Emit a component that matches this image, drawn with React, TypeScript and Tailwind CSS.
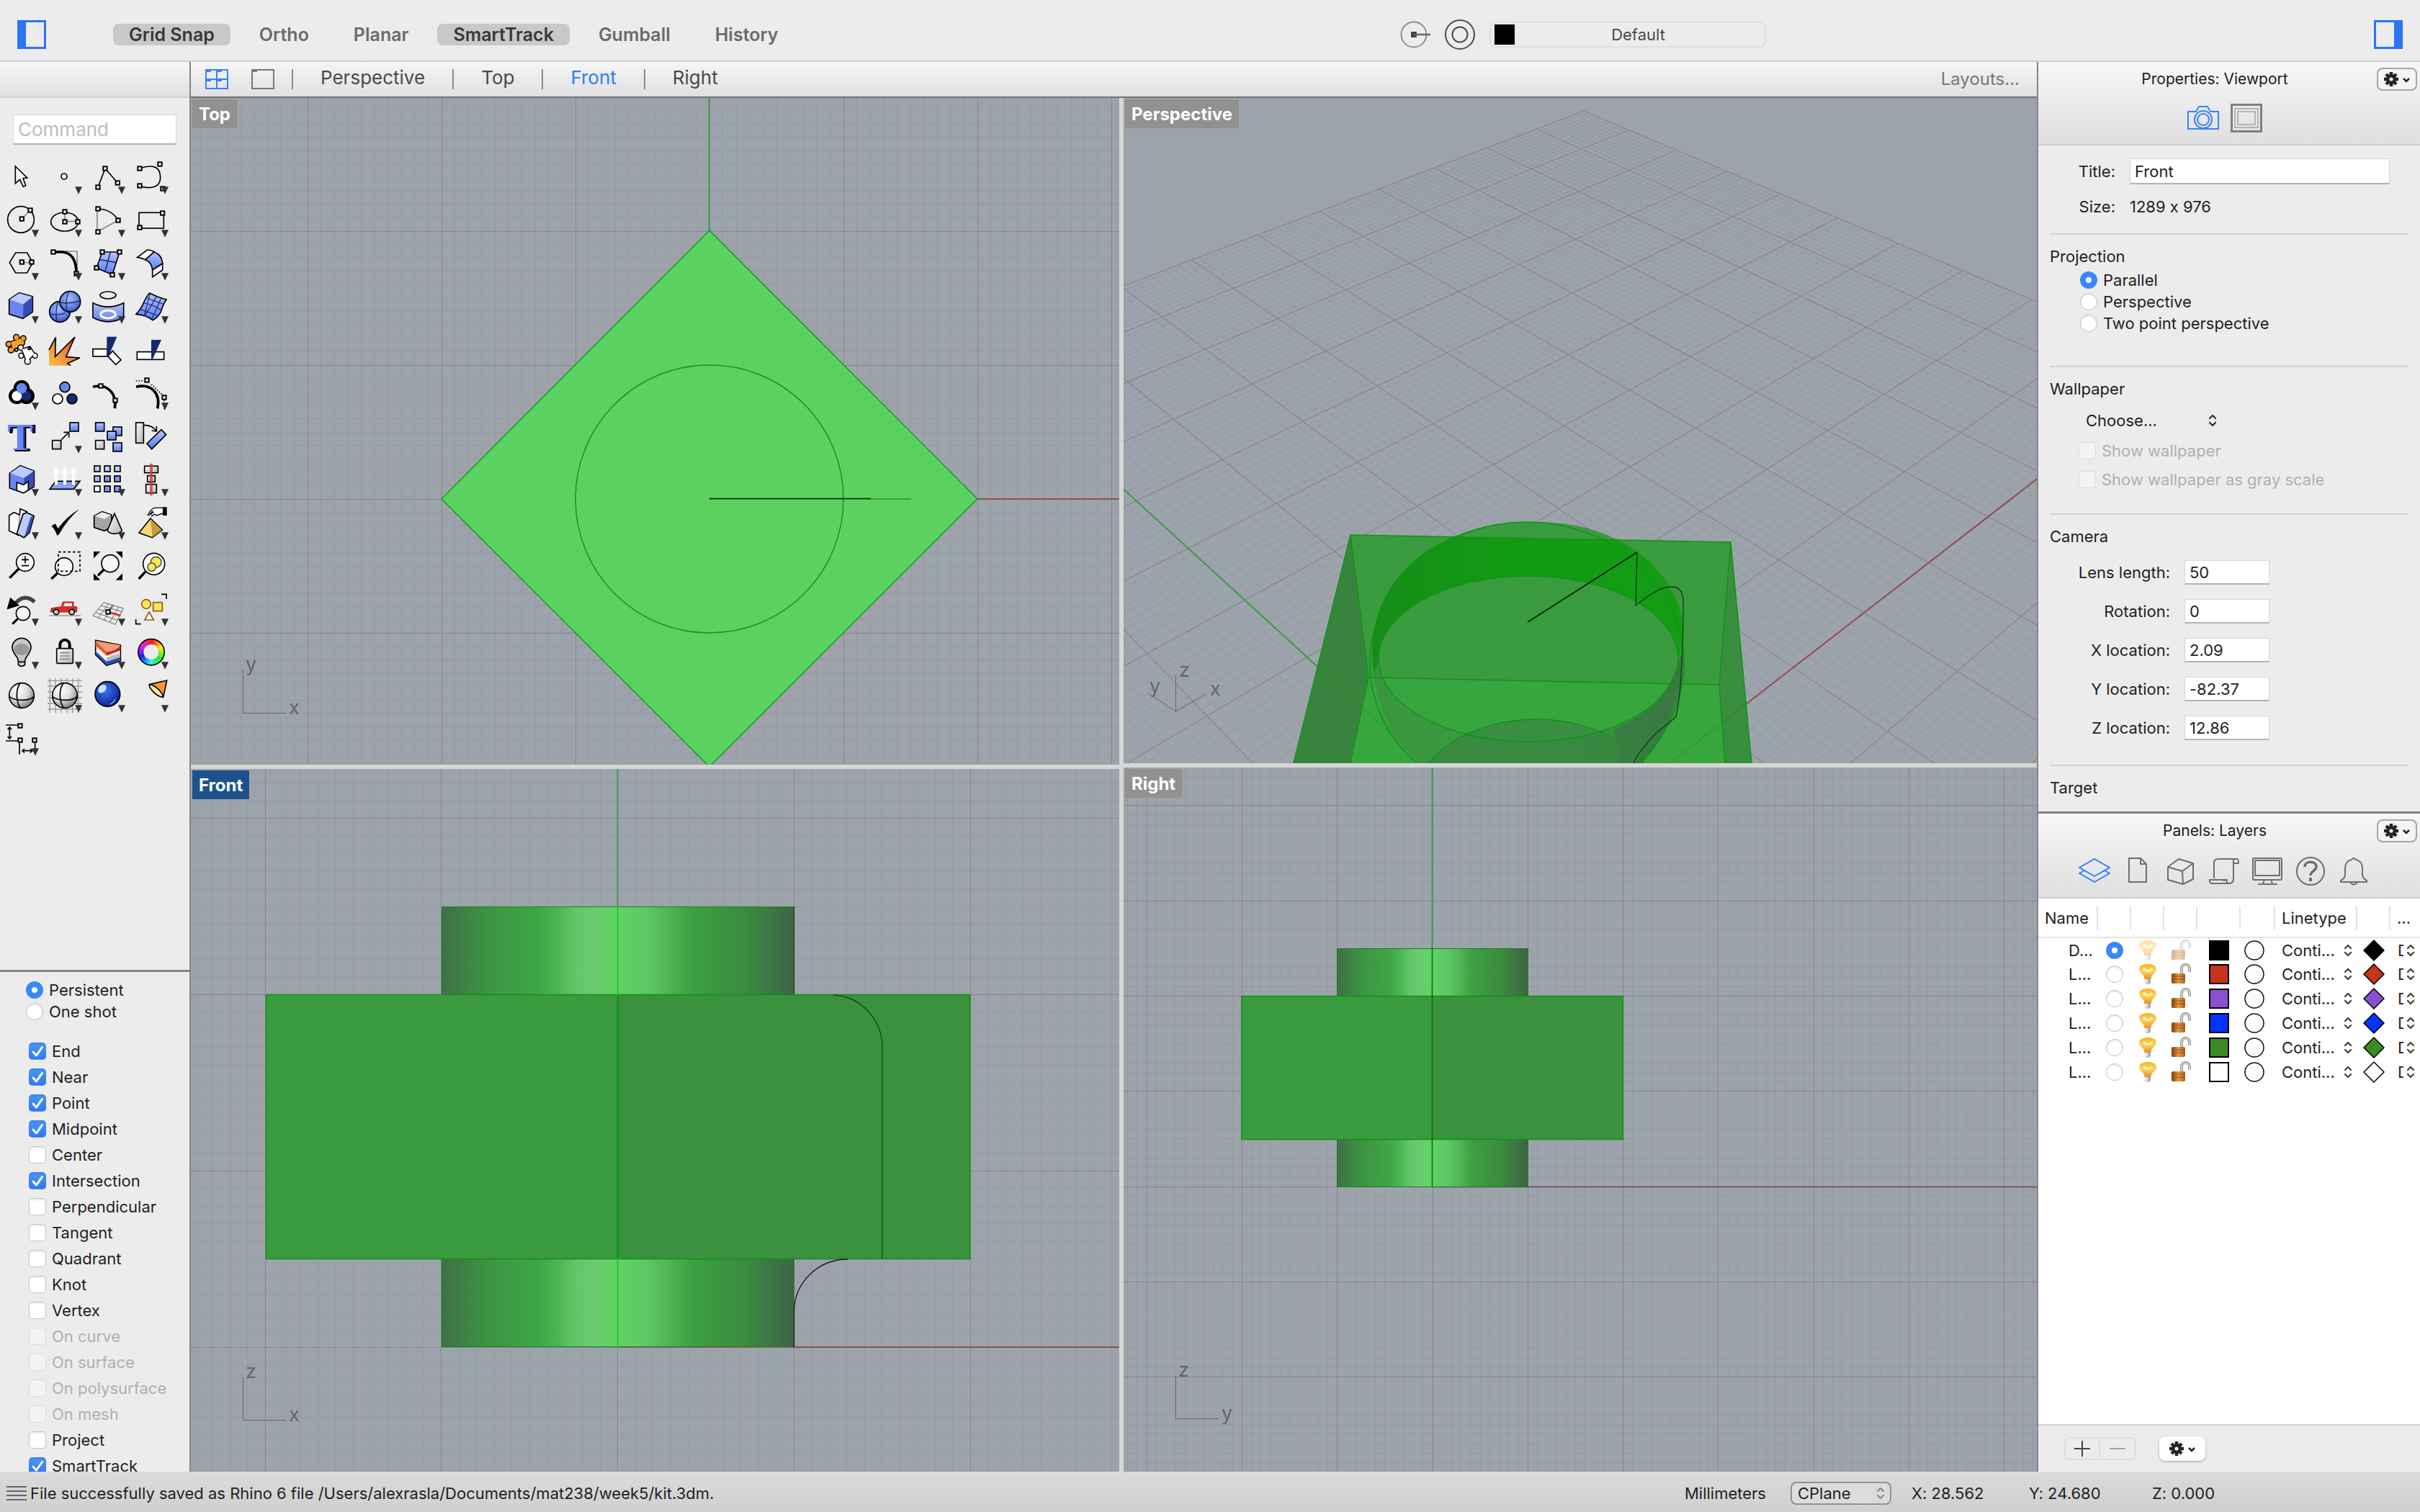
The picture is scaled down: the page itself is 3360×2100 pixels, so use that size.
import { useState } from 'react';
import type { ReactNode } from 'react';
import { clsx } from 'clsx';

/* ---------- small controls ---------- */

function UpDown({ className }: { className?: string }) {
  return (
    <svg viewBox="0 0 12 18" className={clsx('pointer-events-none w-3 h-[18px]', className)} fill="none" stroke="currentColor" strokeWidth="2.4" strokeLinecap="round" strokeLinejoin="round" aria-hidden>
      <path d="M2 6 6 2 10 6M2 12 6 16 10 12" />
    </svg>
  );
}

function Check({ label, on, disabled, className }: { label: string; on?: boolean; disabled?: boolean; className?: string }) {
  return (
    <label className={clsx('flex items-center gap-2 whitespace-nowrap', disabled && 'text-[#b0b0b0]', className)}>
      <span className="grid shrink-0">
        <input type="checkbox" defaultChecked={on} disabled={disabled}
          className="peer col-start-1 row-start-1 appearance-none w-6 h-6 rounded-[5px] bg-white border border-[#c6c6c6] shadow-[inset_0_2px_2px_rgba(0,0,0,0.08)] checked:border-transparent checked:bg-linear-to-b checked:from-[#4a97f8] checked:to-[#2f78f6] disabled:bg-[#f3f3f3] disabled:border-[#dcdcdc] disabled:shadow-none" />
        <svg viewBox="0 0 24 24" className="col-start-1 row-start-1 w-6 h-6 hidden peer-checked:block pointer-events-none" fill="none" stroke="#fff" strokeWidth="3" strokeLinecap="round" strokeLinejoin="round" aria-hidden>
          <path d="M6 13 10.5 18 18.5 6.5" />
        </svg>
      </span>
      {label}
    </label>
  );
}

const radioCls = 'shrink-0 appearance-none w-6 h-6 rounded-full bg-white border border-[#c0c0c0] shadow-[inset_0_2px_2px_rgba(0,0,0,0.08)] checked:border-[8px] checked:border-[#3b87f7] checked:shadow-none';

function Radio({ label, name, on }: { label: string; name: string; on?: boolean }) {
  return (
    <label className="flex items-center gap-2 h-[30px] whitespace-nowrap">
      <input type="radio" name={name} defaultChecked={on} className={radioCls} />
      {label}
    </label>
  );
}

const fieldCls = 'bg-white border border-[#d6d6d6] border-b-2 border-b-[#b4b4b4] px-[6px] outline-none';

function Gear() {
  return (
    <svg viewBox="0 0 40 24" className="w-10 h-6" aria-hidden>
      <g stroke="#222" strokeWidth="4.5">
        <path d="M12 2V22M2 12H22M5 5 19 19M19 5 5 19" />
      </g>
      <circle cx="12" cy="12" r="7" fill="#222" />
      <circle cx="12" cy="12" r="2.6" fill="#eee" />
      <path d="M29 11 33 15 37 11" fill="none" stroke="#222" strokeWidth="2.6" />
    </svg>
  );
}

/* ---------- tool palette ---------- */

const N = ({ x, y }: { x: number; y: number }) => <rect x={x - 8} y={y - 8} width="16" height="16" fill="#fff" strokeWidth="6" />;
const Sq = ({ x, y, s = 36, f = 'url(#blueG)' }: { x: number; y: number; s?: number; f?: string }) => (
  <rect x={x} y={y} width={s} height={s} fill={f} />
);

function ColorWheel() {
  return (
    <>
      <circle cx="90" cy="107" r="57" fill="#000" stroke="none" />
      {Array.from({ length: 36 }, (_, i) => {
        const a = ((i * 10 - 90) * Math.PI) / 180;
        const b = ((i * 10 - 79) * Math.PI) / 180;
        return (
          <path key={i} stroke={`hsl(${i * 10} 95% 55%)`} strokeWidth="20"
            d={`M${90 + 42 * Math.cos(a)} ${107 + 42 * Math.sin(a)}A42 42 0 0 1 ${90 + 42 * Math.cos(b)} ${107 + 42 * Math.sin(b)}`} />
        );
      })}
      <circle cx="90" cy="107" r="32" fill="#ececec" stroke="none" />
    </>
  );
}

// each piece is drawn twice, a black outline first and then the fill over it
const whitePiece = (
  <>
    <path d="M92 106 124 96 142 124 112 156Z" />
    <circle cx="86" cy="98" r="9" />
    <circle cx="146" cy="132" r="8" />
    <circle cx="115" cy="156" r="10" />
    <circle cx="88" cy="132" r="8" />
  </>
);
const orangePiece = (
  <>
    <path d="M44 76 88 60 96 86 54 106Z" />
    <circle cx="68" cy="56" r="10" />
    <circle cx="97" cy="60" r="9" />
    <circle cx="36" cy="84" r="9" />
    <circle cx="46" cy="108" r="10" />
    <circle cx="92" cy="78" r="9" />
  </>
);

function Puzzle() {
  return (
    <>
      <g stroke="#000" strokeWidth="9" fill="#000">{orangePiece}</g>
      <g stroke="none" fill="#f39f27">{orangePiece}</g>
      <g stroke="#000" strokeWidth="9" fill="#000">{whitePiece}</g>
      <g stroke="none" fill="#fff">{whitePiece}</g>
      <g stroke="#000" fill="#ececec"><circle cx="68" cy="108" r="6" /><circle cx="122" cy="102" r="5" /></g>
    </>
  );
}

const wireSphere = (
  <>
    <circle cx="90" cy="108" r="52" fill="url(#greyBall)" />
    <path d="M85 56C65 80 65 130 85 160M38 112C60 130 120 134 142 112" />
  </>
);

type Tool = { name: string; more?: boolean; art: ReactNode };

const tools: Tool[] = [
  { name: 'Select', art: <path d="M64 63 113 111 96 113 107 143 97 148 83 118 64 134Z" fill="#fff" /> },
  { name: 'Point', more: true, art: <circle cx="87" cy="105" r="12" fill="#fff" /> },
  { name: 'Polyline', more: true, art: <><path d="M48 150 78 72 130 132" /><N x={48} y={150} /><N x={78} y={72} /><N x={130} y={132} /></> },
  { name: 'Curve', more: true, art: <><path d="M42 72C90 55 128 60 128 108 128 150 92 160 42 146" /><N x={42} y={72} /><N x={126} y={54} /><N x={42} y={144} /><N x={138} y={156} /></> },

  { name: 'Circle', more: true, art: <><circle cx="87" cy="105" r="55" /><path d="M91 102 126 66" stroke="#888" /><N x={91} y={102} /><N x={126} y={66} /></> },
  { name: 'Ellipse', more: true, art: <><ellipse cx="89" cy="114" rx="57" ry="39" /><path d="M90 72V112H144" stroke="#888" /><N x={90} y={72} /><N x={90} y={114} /><N x={144} y={114} /></> },
  { name: 'Arc', more: true, art: <><path d="M132 108 45 156V60" stroke="#888" /><path d="M48 60Q105 62 132 108" /><N x={48} y={60} /><N x={132} y={108} /><N x={48} y={156} /></> },
  { name: 'Rectangle', more: true, art: <><rect x="39" y="76" width="103" height="65" /><N x={137} y={78} /><N x={42} y={138} /></> },

  { name: 'Polygon', more: true, art: <><path d="M40 104 65 63H113L136 104 113 147H65Z" /><path d="M91 104H132" stroke="#888" /><N x={91} y={102} /><N x={132} y={102} /></> },
  { name: 'Fillet', more: true, art: <><path d="M42 57H141V150" stroke="#888" /><path d="M42 60H78C118 62 138 92 138 150" strokeWidth="11" /><N x={42} y={60} /><N x={138} y={150} /></> },
  { name: 'Surface', more: true, art: <><path d="M66 60H138L108 155 42 126Z" fill="url(#blueG)" /><path d="M100 60 78 140M56 92 124 104" stroke="#1f3375" /><N x={66} y={60} /><N x={138} y={60} /><N x={108} y={155} /><N x={42} y={126} /></> },
  { name: 'Sweep', more: true, art: <><path d="M32 82 74 51Q92 52 102 60L66 92Q50 84 32 82Z" fill="#fff" /><path d="M102 60Q135 72 137 108L95 135Q92 104 66 92Z" fill="url(#blueG)" /><path d="M137 108V135L95 164V135Z" fill="#fff" /></> },

  { name: 'Box', more: true, art: <><path d="M38 78 80 50 136 66V130L95 157 38 139Z" fill="#6885f5" /><path d="M40 78 80 52 134 67 97 98Z" fill="#bccbfb" stroke="none" /><path d="M97 98 134 68V129L96 154Z" fill="#344db5" stroke="none" /></> },
  { name: 'Sphere', more: true, art: <><circle cx="69" cy="129" r="43" fill="url(#blueBall)" /><circle cx="112" cy="87" r="43" fill="url(#blueBall)" /><path d="M28 138Q60 145 92 135M62 88Q48 130 58 168M71 90Q110 98 153 84M106 46Q90 80 100 128" stroke="#1f3375" strokeWidth="4" /></> },
  { name: 'Project', more: true, art: <><ellipse cx="90" cy="60" rx="33" ry="15" /><path d="M27 92Q90 125 155 92V153Q90 188 27 153Z" fill="url(#blueG)" /><ellipse cx="90" cy="140" rx="31" ry="16" stroke="#fff" strokeWidth="9" /></> },
  { name: 'Surface edit', more: true, art: <><path d="M83 51Q120 70 153 78 138 100 130 130 115 155 96 164 70 142 27 139 48 118 58 92 70 65 83 51Z" fill="url(#blueG)" /><path d="M58 92Q100 100 130 122M112 65Q88 110 60 148M42 118 120 145M72 72 142 98M85 53 62 142M130 75 92 160" stroke="#1f3375" strokeWidth="4" /></> },

  { name: 'Join', art: <Puzzle /> },
  { name: 'Explode', art: <><path d="M24 108 52 56 50 136 132 54 95 137 153 141 101 164 115 173H24Z" fill="url(#fire)" stroke="none" /><path d="M24 108 52 56 50 136 132 54 95 137 153 141 101 164 115 173" /></> },
  { name: 'Trim', art: <><rect x="27" y="104" width="60" height="31" fill="#fff" /><path d="M109 112 144 150 122 169 89 134Z" fill="#fff" /><path d="M85 53H127L96 125 85 138Z" fill="#172a70" stroke="none" /></> },
  { name: 'Split', art: <><rect x="31" y="116" width="112" height="32" fill="#fff" /><path d="M90 66H132L98 142 90 150Z" fill="#172a70" stroke="none" /></> },

  { name: 'Group', more: true, art: <><g strokeWidth="20"><circle cx="90" cy="88" r="24" /><circle cx="70" cy="120" r="24" /><circle cx="110" cy="120" r="24" /></g><g stroke="none"><circle cx="110" cy="120" r="21" fill="#172a70" /><circle cx="70" cy="120" r="21" fill="#fff" /><circle cx="90" cy="88" r="22" fill="#6885f5" /></g></> },
  { name: 'Ungroup', art: <><circle cx="90" cy="83" r="21" fill="#6885f5" /><circle cx="60" cy="132" r="21" fill="#fff" /><circle cx="120" cy="132" r="21" fill="#172a70" /></> },
  { name: 'Edit points', art: <><path d="M27 82C85 68 128 105 118 172" strokeWidth="11" /><N x={60} y={78} /><N x={120} y={138} /></> },
  { name: 'Control points', more: true, art: <><path d="M27 82C90 66 130 110 116 172" strokeWidth="11" /><path d="M26 57H60M90 72 144 122V176" strokeDasharray="5 6" /><N x={72} y={54} /><N x={144} y={126} /></> },

  { name: 'Text', art: <><text x="94" y="168" textAnchor="middle" fontFamily="Liberation Serif, serif" fontWeight="700" fontSize="160" fill="#2c44a4" strokeWidth="6">T</text><text x="84" y="164" textAnchor="middle" fontFamily="Liberation Serif, serif" fontWeight="700" fontSize="160" fill="#6885f5" stroke="none" aria-hidden>T</text></> },
  { name: 'Move', more: true, art: <><Sq x={38} y={125} f="url(#greyG)" /><Sq x={111} y={51} /><path d="M76 122 105 93M85 91H107V113" /></> },
  { name: 'Copy', art: <><Sq x={38} y={51} /><Sq x={111} y={69} /><Sq x={87} y={87} /><Sq x={38} y={125} f="url(#greyG)" /><Sq x={111} y={135} /></> },
  { name: 'Rotate', art: <><rect x="26" y="51" width="32" height="85" fill="url(#greyG)" /><path d="M60 62Q92 60 112 86M92 84 112 87V66" /><path d="M72 138 132 80 152 101 92 161Z" fill="url(#blueG)" /></> },

  { name: 'Boolean', more: true, art: <><path d="M40 82 84 50 142 72V138L98 164 40 144Z" fill="#6885f5" /><path d="M42 82 84 52 140 73 100 102Z" fill="#bccbfb" stroke="none" /><path d="M100 102 140 74V137L100 160Z" fill="#344db5" stroke="none" /><path d="M70 120 98 130 118 116V152L98 164 70 154Z" fill="#fff" /></> },
  { name: 'Extrude', more: true, art: <><path d="M52 115H153L127 148H27Z" fill="#87a0f8" /><path d="M54 130V80M90 130V80M126 130V80" stroke="#fff" strokeWidth="12" /><path d="M38 82 54 55 70 82ZM74 82 90 55 106 82ZM110 82 126 55 142 82Z" fill="#fff" stroke="none" /></> },
  { name: 'Array', more: true, art: <>{[33, 75, 117].map((y, r) => [33, 75, 117].map((x, c) => <Sq key={`${x}-${y}`} x={x} y={y + 18} s={24} f={r === 2 && c === 0 ? '#fff' : r === 0 ? '#bccbfb' : c === 0 ? '#a9bbfa' : '#7e98f8'} />))}</> },
  { name: 'Align', more: true, art: <><rect x="62" y="52" width="56" height="28" fill="url(#greyG)" /><rect x="74" y="92" width="32" height="26" fill="url(#greyG)" /><rect x="68" y="128" width="44" height="36" fill="url(#greyG)" /><path d="M90 42V174" stroke="#c9372c" strokeWidth="11" opacity=".8" /></> },

  { name: 'Bend', more: true, art: <><path d="M38 78 58 65 82 76 84 50 112 62 90 100 76 160 38 142Z" fill="#fafafa" /><path d="M82 76 76 150" stroke="#999" /><path d="M70 154 96 72 112 66 142 80 122 150 100 170Z" fill="#bccbfb" /><path d="M140 80 120 150 102 166 128 84Z" fill="#344db5" stroke="none" /></> },
  { name: 'Check', more: true, art: <path d="M34 122 50 112 62 132Q100 80 150 52 100 95 66 156L58 162Q48 132 34 122Z" fill="#000" stroke="none" /> },
  { name: 'Mesh', more: true, art: <><path d="M32 80 65 62 105 75V125L75 142 32 128Z" fill="#a5a5a5" /><path d="M34 80 65 64 103 76 75 92Z" fill="#eee" stroke="none" /><path d="M117 70 148 140Q140 154 117 154 94 154 87 140Z" fill="url(#greyG)" /></> },
  { name: 'Drag', more: true, art: <><path d="M87 90 136 138 94 170 39 150Z" fill="#f6d77c" /><path d="M87 92 134 138 95 168Z" fill="#c79a3f" stroke="none" /><path d="M75 78Q88 50 104 46H140V68L112 78 104 72 90 82M88 74 100 62M80 78 96 58" fill="#fff" strokeWidth="4" /><rect x="138" y="43" width="17" height="35" fill="#000" stroke="none" /></> },

  { name: 'Zoom', art: <><path d="M78 120 40 158" strokeWidth="10" /><circle cx="105" cy="93" r="37" fill="#f6f6f6" /><path d="M90 82H120M105 67V97M90 107H120" /></> },
  { name: 'Zoom window', art: <><path d="M62 136 34 162" strokeWidth="10" /><circle cx="87" cy="111" r="37" fill="#f6f6f6" /><rect x="63" y="50" width="90" height="80" strokeDasharray="11 9" /></> },
  { name: 'Zoom extents', art: <><path d="M74 122 48 148" strokeWidth="10" /><circle cx="99" cy="98" r="36" fill="#f6f6f6" /><path d="M30 48H58L30 76ZM150 48V76L122 48ZM30 167V139L58 167ZM150 167H122L150 139Z" fill="#000" stroke="none" /></> },
  { name: 'Zoom selected', art: <><path d="M66 132 38 162" strokeWidth="10" /><circle cx="101" cy="100" r="45" fill="#fff" /><g fill="#fbe84f" stroke="#555"><circle cx="110" cy="92" r="22" /><circle cx="92" cy="113" r="17" /></g></> },

  { name: 'Undo view', more: true, art: <><path d="M62 86Q100 40 144 78" stroke="#444" strokeWidth="16" /><path d="M32 106 44 64 76 92Z" fill="#000" /><path d="M74 148 52 170" strokeWidth="9" /><circle cx="96" cy="126" r="29" fill="#f6f6f6" /></> },
  { name: 'Named views', more: true, art: <><path d="M24 135H156" stroke="#999" /><path d="M31 118 34 104 76 98 82 78H126V98H140V120H31Z" fill="#d92f2a" stroke="#b01f1c" strokeWidth="3" /><path d="M84 96 90 83H120V96Z" fill="#fff" stroke="none" /><circle cx="54" cy="120" r="11" fill="#ccc" /><circle cx="119" cy="120" r="11" fill="#ccc" /></> },
  { name: 'CPlane', more: true, art: <><path d="M72 80 154 105 120 172 27 135ZM61 94 147 118M49 108 139 136M38 122 129 154M92 86 50 144M113 92 74 154M134 99 97 163" stroke="#666" strokeWidth="3" /><path d="M92 116 112 90" stroke="#3fa535" strokeWidth="8" /><path d="M98 122 142 135" stroke="#cf2a27" strokeWidth="8" /><N x={90} y={120} /></> },
  { name: 'Layouts', more: true, art: <><g stroke="#96561d" fill="#fbe84f"><circle cx="69" cy="87" r="19" /><rect x="98" y="80" width="38" height="36" /><path d="M81 120 100 153H63Z" fill="#fff" /></g><path d="M132 46H153V66M26 150V170H47" /></> },

  { name: 'Hide', more: true, art: <><path d="M76 160V142C74 124 51 112 51 88A39 39 0 0 1 129 88C129 112 106 124 104 142V160Q90 172 76 160Z" fill="#c9c9c9" /><ellipse cx="90" cy="96" rx="32" ry="24" fill="#999" stroke="none" /><path d="M76 148H104" /></> },
  { name: 'Lock', more: true, art: <><path d="M70 92V76A20 20 0 0 1 110 76V92" strokeWidth="12" /><rect x="56" y="92" width="68" height="62" rx="4" fill="url(#greyG)" /><path d="M70 110H110M70 123H110M70 136H110" stroke="#888" /></> },
  { name: 'Layers', more: true, art: <><path d="M38 58 142 78V144L84 163 38 118Z" fill="#f5f5f5" /><path d="M40 104 84 146 140 128V142L84 161 40 118Z" fill="#274cb5" stroke="none" /><path d="M84 130 140 112V128L84 146Z" fill="#bbb" stroke="none" /><path d="M38 60 84 106V122L38 80Z" fill="#ee5a24" stroke="none" /><path d="M38 60 142 78Q118 104 84 106Z" fill="#f39a77" stroke="none" /><path d="M84 106Q118 104 142 80V100L84 122Z" fill="#c32a1c" stroke="none" /></> },
  { name: 'Color', more: true, art: <ColorWheel /> },

  { name: 'Shade', art: wireSphere },
  { name: 'Shade grid', more: true, art: <><path d="M28 36V180M51 36V180M75 36V180M99 36V180M122 36V180M146 36V180M18 46H162M18 69H162M18 93H162M18 117H162M18 141H162M18 165H162" stroke="#999" strokeWidth="4" />{wireSphere}</> },
  { name: 'Render', more: true, art: <><circle cx="88" cy="102" r="52" fill="url(#deepBall)" /><ellipse cx="66" cy="80" rx="20" ry="14" transform="rotate(-45 66 80)" fill="#cfe0ff" stroke="none" /><path d="M92 146Q112 138 124 116 118 142 92 146Z" fill="#9fe0ff" stroke="none" /></> },
  { name: 'Spotlight', more: true, art: <><path d="M82 62 155 45 140 115Q96 104 82 62Z" fill="#f49a33" /><ellipse cx="110" cy="88" rx="36" ry="11" transform="rotate(42 110 88)" fill="#fde9b8" /></> },

  { name: 'Dimension', more: true, art: <><path d="M24 51H84M24 117H84M81 125V173M146 125V150M40 64V104M94 158H134" /><path d="M32 70 40 60 48 70M32 98 40 108 48 98M102 150 93 158 102 166M126 150 135 158 126 166" /><N x={84} y={54} /><N x={84} y={114} /><N x={144} y={114} /></> },
];

function Defs() {
  return (
    <svg className="absolute w-0 h-0" aria-hidden>
      <defs>
        <linearGradient id="blueG" x1="0" y1="0" x2="0" y2="1"><stop offset="0" stopColor="#b4c4fb" /><stop offset="1" stopColor="#5b7cf3" /></linearGradient>
        <linearGradient id="greyG" x1="0" y1="0" x2="1" y2="1"><stop offset="0" stopColor="#fdfdfd" /><stop offset="1" stopColor="#b4b4b4" /></linearGradient>
        <linearGradient id="fire" x1="0" y1="1" x2="1" y2="0"><stop offset="0" stopColor="#f9c142" /><stop offset=".5" stopColor="#f0863a" /><stop offset="1" stopColor="#e2341f" /></linearGradient>
        <radialGradient id="blueBall" cx=".45" cy=".35" r=".7"><stop offset="0" stopColor="#a9bcfa" /><stop offset=".6" stopColor="#6684e8" /><stop offset="1" stopColor="#2c44a4" /></radialGradient>
        <radialGradient id="greyBall" cx=".35" cy=".3" r=".8"><stop offset="0" stopColor="#fff" /><stop offset=".5" stopColor="#dcdcdc" /><stop offset="1" stopColor="#6a6a6a" /></radialGradient>
        <radialGradient id="deepBall" cx=".4" cy=".35" r=".7"><stop offset="0" stopColor="#3c78f0" /><stop offset="1" stopColor="#0b1a8c" /></radialGradient>
        <linearGradient id="bulb" x1="0" y1="0" x2="0" y2="1"><stop offset="0" stopColor="#f8b020" /><stop offset=".45" stopColor="#fbd560" /><stop offset="1" stopColor="#e88a1c" /></linearGradient>
        <linearGradient id="brass" x1="0" y1="0" x2="1" y2="0"><stop offset="0" stopColor="#7a3f10" /><stop offset=".5" stopColor="#e89a40" /><stop offset="1" stopColor="#a85f1c" /></linearGradient>
        <linearGradient id="cyl">
          <stop offset="0" stopColor="#3a6d40" /><stop offset=".13" stopColor="#37933d" /><stop offset=".27" stopColor="#39a63e" />
          <stop offset=".33" stopColor="#47b64a" /><stop offset=".38" stopColor="#5fc863" /><stop offset=".43" stopColor="#69cd6e" />
          <stop offset=".5" stopColor="#58d85d" /><stop offset=".58" stopColor="#5bc960" /><stop offset=".65" stopColor="#49b44e" />
          <stop offset=".71" stopColor="#379f3b" /><stop offset=".86" stopColor="#358a3a" /><stop offset="1" stopColor="#38603f" />
        </linearGradient>
      </defs>
    </svg>
  );
}

function Palette() {
  return (
    <div className="grid grid-cols-[repeat(4,60px)] auto-rows-[60px]">
      {tools.map((t) => (
        <button key={t.name} aria-label={t.name} title={t.name}>
          <svg viewBox="0 0 180 180" className="w-[60px] h-[60px] overflow-visible" fill="none" stroke="#000" strokeWidth="5">
            {t.art}
            {t.more && <path d="M132 148H162L147 179Z" fill="#333" stroke="none" />}
          </svg>
        </button>
      ))}
    </div>
  );
}

const snaps: [string, boolean, boolean?][] = [
  ['End', true], ['Near', true], ['Point', true], ['Midpoint', true], ['Center', false], ['Intersection', true],
  ['Perpendicular', false], ['Tangent', false], ['Quadrant', false], ['Knot', false], ['Vertex', false],
  ['On curve', false, true], ['On surface', false, true], ['On polysurface', false, true], ['On mesh', false, true],
  ['Project', false], ['SmartTrack', true],
];

function Sidebar() {
  return (
    <aside className="w-[265px] shrink-0 flex flex-col min-h-0 border-r-2 border-[#858585]">
      <div className="h-[50px] shrink-0 bg-linear-to-b from-[#f6f6f6] to-[#e0e0e0] border-b-2 border-[#cfcfcf]" />
      <div className="px-[18px] pt-[23px] pb-[9px]">
        <input aria-label="Command" placeholder="Command" className={clsx(fieldCls, 'w-full h-[42px] text-[26px] placeholder:text-[#bdbdbd]')} />
      </div>
      <Palette />
      <div className="flex-1 min-h-0" />
      <div className="h-[697px] shrink-0 overflow-hidden border-t-3 border-[#858585] pt-[10px]">
        <div className="pl-9">
          <Radio name="osnap" label="Persistent" on />
          <Radio name="osnap" label="One shot" />
        </div>
        <div className="pl-10 pt-[22px]">
          {snaps.map(([label, on, off]) => <Check key={label} label={label} on={on} disabled={off} className="h-9" />)}
        </div>
      </div>
    </aside>
  );
}

/* ---------- viewports ---------- */

type GridProps = { w: number; h: number; ox: number; oy: number; unit: number };

function Grid({ w, h, ox, oy, unit }: GridProps) {
  let minor = '';
  let major = '';
  for (let i = Math.ceil(-ox / unit); ox + i * unit < w; i++) {
    const d = `M${Math.floor(ox + i * unit) + 0.5} 0V${h}`;
    if (i % 10) minor += d; else major += d;
  }
  for (let i = Math.ceil(-oy / unit); oy + i * unit < h; i++) {
    const d = `M0 ${Math.floor(oy + i * unit) + 0.5}H${w}`;
    if (i % 10) minor += d; else major += d;
  }
  return (
    <>
      <path d={minor} stroke="#929aa2" />
      <path d={major} stroke="#85878f" />
    </>
  );
}

function AxisIcon({ x, y, up, side }: { x: number; y: number; up: string; side: string }) {
  return (
    <g fontSize="27" fontFamily="Inter, sans-serif" fill="#63666a">
      <path d={`M${x + 0.5} ${y - 60}V${y + 0.5}H${x + 60}`} fill="none" stroke="#63666a" />
      <text x={x + 4} y={y - 58}>{up}</text>
      <text x={x + 64} y={y + 2}>{side}</text>
    </g>
  );
}

function Viewport({ name, active, w, h, children }: { name: string; active?: boolean; w: number; h: number; children: ReactNode }) {
  return (
    <section className="relative min-h-0 min-w-0 overflow-hidden bg-[#9da3ab]" aria-label={name}>
      <svg viewBox={`0 0 ${w} ${h}`} preserveAspectRatio="xMidYMid slice" className="block w-full h-full" fill="none">
        {children}
      </svg>
      <h2 className={clsx('absolute left-[2px] top-[2px] h-10 px-[9px] text-[24px] leading-[42px] font-bold text-white', active ? 'bg-[#1d528f]' : 'bg-[#919191]')}>{name}</h2>
    </section>
  );
}

function TopView() {
  return (
    <Viewport name="Top" w={1289} h={926}>
      <Grid w={1289} h={926} ox={720} oy={557} unit={18.6} />
      <path d="M719.5 0V185" stroke="#3f9a45" strokeWidth="2" />
      <path d="M1092 557H1289" stroke="#944b50" strokeWidth="2" />
      <path d="M720 184 1092 557 720 929 348 557Z" fill="#50da53" fillOpacity=".86" stroke="#1c9a24" strokeWidth="1.5" />
      <circle cx="720" cy="557" r="186" stroke="#159420" strokeWidth="1.5" />
      <path d="M720 557H1000" stroke="#1d6b25" />
      <path d="M720 556.5H944" stroke="#0b2c10" strokeWidth="1.5" />
      <AxisIcon x={72} y={854} up="y" side="x" />
    </Viewport>
  );
}

function FrontView() {
  return (
    <Viewport name="Front" active w={1289} h={976}>
      <Grid w={1289} h={976} ox={592.6} oy={803} unit={24.48} />
      <path d="M592.5 0V192" stroke="#3f9a45" strokeWidth="2" />
      <path d="M837 803H1289" stroke="#944b50" strokeWidth="2" />
      <g fill="url(#cyl)" fillOpacity=".94" stroke="#1c7d24">
        <rect x="348.5" y="191.5" width="489" height="122" />
        <rect x="348.5" y="680.5" width="489" height="122" />
      </g>
      <path d="M348 191.5H837M348 802.5H592" stroke="#0f8a14" />
      <path d="M592 803H837" stroke="#6d5c2c" />
      <rect x="104" y="313.5" width="488.5" height="367" fill="#2b9a2d" fillOpacity=".86" />
      <rect x="592.5" y="313.5" width="489.5" height="367" fill="#2a8e2c" fillOpacity=".86" />
      <path d="M104.5 313.5H1082V680.5H104.5Z" stroke="#12901a" strokeWidth="1.5" />
      <path d="M592.5 191V314M592.5 680V803" stroke="#2fc436" strokeWidth="2" />
      <path d="M592.5 314V680" stroke="#089012" strokeWidth="2" />
      <path d="M892 314A71 73 0 0 1 960 387V680" stroke="#14451a" strokeWidth="1.3" />
      <path d="M912 681A74 73 0 0 0 837.5 754V803" stroke="#1a1a1a" strokeWidth="1.3" />
      <path d="M837.5 191V313" stroke="#26402a" strokeWidth="1.3" />
      <AxisIcon x={72} y={904} up="z" side="x" />
    </Viewport>
  );
}

function RightView() {
  return (
    <Viewport name="Right" w={1268} h={978}>
      <Grid w={1268} h={978} ox={429} oy={582} unit={13.23} />
      <path d="M428.5 0V252" stroke="#3f9a45" strokeWidth="2" />
      <path d="M429 582.5H1268" stroke="#6f4248" strokeWidth="1.5" />
      <g fill="url(#cyl)" fillOpacity=".94" stroke="#1c7d24">
        <rect x="296.5" y="251.5" width="265" height="66" />
        <rect x="296.5" y="516.5" width="265" height="66" />
      </g>
      <rect x="164" y="317.5" width="265" height="199" fill="#2b9a2d" fillOpacity=".86" />
      <rect x="429" y="317.5" width="264.5" height="199" fill="#2a8e2c" fillOpacity=".86" />
      <path d="M164 317.5H693.5V516.5H164Z" stroke="#12901a" strokeWidth="1.5" />
      <path d="M428.5 251V582" stroke="#0a6a14" strokeWidth="1.5" />
      <AxisIcon x={72} y={904} up="z" side="y" />
    </Viewport>
  );
}

// ground plane: (u, v) counts major cells from the far corner of the grid
const G = -0.0253;
const H = -0.0271;
const ground = (u: number, v: number) => {
  const d = 1 + G * u + H * v;
  return `${((639.1 - 80.2 * u + 43.54 * v) / d).toFixed(1)} ${((18.3 + 23.85 * u + 25.14 * v) / d).toFixed(1)}`;
};

function groundLines() {
  let minor = '';
  let major = '';
  for (let i = 0; i <= 200; i++) {
    const k = i / 10;
    const vMax = Math.min(20, (0.95 + G * k) / -H);
    const uMax = Math.min(20, (0.95 + H * k) / -G);
    const d = `M${ground(k, 0)}L${ground(k, vMax)}M${ground(0, k)}L${ground(uMax, k)}`;
    if (i % 10) minor += d; else major += d;
  }
  return { minor, major };
}

function PerspectiveView() {
  const { minor, major } = groundLines();
  return (
    <Viewport name="Perspective" w={1268} h={924}>
      <defs>
        <clipPath id="bore"><ellipse cx="562" cy="779" rx="208" ry="115" /></clipPath>
        <linearGradient id="wall"><stop offset="0" stopColor="#148c14" /><stop offset=".4" stopColor="#109a12" /><stop offset="1" stopColor="#129c12" /></linearGradient>
        <linearGradient id="side"><stop offset="0" stopColor="#3b8a40" /><stop offset=".5" stopColor="#3a9a40" /><stop offset=".85" stopColor="#3a7f42" /><stop offset="1" stopColor="#3b7043" /></linearGradient>
      </defs>
      <path d={minor} stroke="#8f97a0" strokeWidth=".7" />
      <path d={major} stroke="#85868f" strokeWidth="1.2" />
      <path d={`M${ground(10, 0)}L${ground(10, 10)}`} stroke="#3f9a45" strokeWidth="2" />
      <path d={`M${ground(0, 10)}L${ground(10, 10)}`} stroke="#944b50" strokeWidth="2" />

      <g fillOpacity=".86">
        <path d="M315 607 843 617 827 815 340 805Z" fill="#2b9a2d" />
        <path d="M340 805 827 815 835 924H315Z" fill="#28a62d" />
        <path d="M315 607 340 805 315 924H236Z" fill="#287f2c" />
        <path d="M843 617 827 815 835 924H872Z" fill="#2a8a2e" />
      </g>
      <path d="M458 609.5C490 596 520 589 567 589 620 589 655 598 685 613.5Z" fill="#2b9a2d" fillOpacity=".86" />
      <path d="M458 609.5 685 613.5C740 640 776 690 778 745 774 765 771 780 770 779A208 115 0 0 0 354 779L348 800C335 730 365 650 458 609.5Z" fill="url(#wall)" fillOpacity=".95" />
      <path d="M348 800 354 779A208 115 0 0 0 770 779L778 770C780 830 760 880 720 924H407C375 890 352 850 348 800Z" fill="url(#side)" fillOpacity=".6" />
      <path d="M770 779C768 810 735 855 680 878L690 924H720C755 885 775 830 776 775Z" fill="#3b6f43" fillOpacity=".6" />
      <ellipse cx="573" cy="979" rx="170" ry="116" fill="#3b7f42" fillOpacity=".6" />
      <g stroke="#0d9614" strokeWidth="1.5">
        <path d="M315 607 843 617 872 924M315 607 236 924M315 607 340 805 315 924M843 617 827 815 835 924M340 805 827 815" />
        <ellipse cx="560" cy="785" rx="218" ry="196" />
        <ellipse cx="562" cy="779" rx="208" ry="115" />
        <ellipse cx="573" cy="979" rx="170" ry="116" />
      </g>
      <path d={`M${ground(10, 7)}L${ground(10, 10)}`} stroke="#1d8a28" strokeWidth="2" clipPath="url(#bore)" />
      <path d="M561 728 713 631" stroke="#0a2410" strokeWidth="1.5" />
      <path d="M713 631 711 705C730 690 745 679 761 679 772 679 777 686 777 700 777 760 774 830 767 859 755 872 744 876 734 888 722 902 713 912 708 924" stroke="#123a18" strokeWidth="1.3" />

      <g stroke="#63666a">
        <path d="M72.5 802V852L34 827M72 852 114 828" />
      </g>
      <g fontSize="27" fontFamily="Inter, sans-serif" fill="#63666a">
        <text x="77" y="804">z</text>
        <text x="36" y="826">y</text>
        <text x="120" y="830">x</text>
      </g>
    </Viewport>
  );
}

function TabBar() {
  const [tab, setTab] = useState('Front');
  return (
    <nav className="h-[50px] shrink-0 flex items-center pl-5 pr-6 bg-linear-to-b from-[#f6f6f6] to-[#e0e0e0] border-b-2 border-[#707070] text-[26px] text-[#4a4a4a]">
      <button aria-label="Four viewports">
        <svg viewBox="0 0 32 28" className="w-8 h-7" fill="none" stroke="#3b82f6" strokeWidth="2">
          <path d="M1 1H31V27H1ZM16 1V27M1 14H31M2 3H8M17 3H23M2 16H8M17 16H23" />
        </svg>
      </button>
      <button aria-label="Single viewport" className="ml-8">
        <svg viewBox="0 0 32 28" className="w-8 h-7" fill="none" stroke="#777" strokeWidth="2">
          <path d="M1 1H31V27H1ZM2 3H8" />
        </svg>
      </button>
      <div className="ml-6 flex items-center h-7 divide-x-2 divide-[#8a8a8a] border-l-2 border-[#8a8a8a]">
        {['Perspective', 'Top', 'Front', 'Right'].map((t) => (
          <button key={t} onClick={() => setTab(t)} className={clsx('h-7 px-[38px] leading-6 pb-1', tab === t && 'text-[#2f7cf6]')}>{t}</button>
        ))}
      </div>
      <button className="ml-auto text-[24px] text-[#777]">Layouts...</button>
    </nav>
  );
}

/* ---------- right panels ---------- */

function PanelHeader({ title, children }: { title: string; children: ReactNode }) {
  return (
    <div className="shrink-0 bg-linear-to-b from-[#f7f7f7] to-[#dfdfdf] border-b-2 border-[#cfcfcf] pt-2">
      <div className="grid grid-cols-[1fr_auto] items-center pr-1">
        <h3 className="text-center pl-5 text-[21px] text-[#1c1c1c]">{title}</h3>
        <button aria-label={`${title} options`} className="w-14 h-8 grid place-items-center rounded-lg border-2 border-[#a6a6a6] bg-[#f4f4f4]"><Gear /></button>
      </div>
      {children}
    </div>
  );
}

const Rule = () => <hr className="border-0 h-[2px] bg-[#d2d2d2]" />;

function NumberField({ id, label, value }: { id: string; label: string; value: string }) {
  return (
    <>
      <label htmlFor={id} className="text-right">{label}</label>
      <input id={id} defaultValue={value} className={clsx(fieldCls, 'w-[118px] h-[34px]')} />
    </>
  );
}

function Properties() {
  return (
    <div>
      <PanelHeader title="Properties: Viewport">
        <div className="flex justify-center gap-4 pt-[18px] pb-4 pr-3">
          <button aria-label="Viewport properties">
            <svg viewBox="0 0 44 36" className="w-11 h-9" fill="none" stroke="#3b82f6" strokeWidth="2">
              <path d="M1 9H12L16 2H28L32 9H43V33H1Z" />
              <circle cx="22" cy="20" r="12" /><circle cx="22" cy="20" r="8" />
            </svg>
          </button>
          <button aria-label="Display properties">
            <svg viewBox="0 0 44 40" className="w-11 h-10" fill="none">
              <path d="M1.5 1.5H42.5V38.5H1.5Z" stroke="#808080" strokeWidth="3" />
              <path d="M6 7H38V33H6ZM10 11H34V29H10Z" stroke="#b5b5b5" strokeWidth="2" />
            </svg>
          </button>
        </div>
      </PanelHeader>
      <div className="pl-4 pr-4 pt-[18px] pb-[18px]">
        <div className="grid grid-cols-[91px_1fr] gap-x-5 gap-y-4 items-center pr-[26px]">
          <label htmlFor="vp-title" className="text-right">Title:</label>
          <input id="vp-title" defaultValue="Front" className={clsx(fieldCls, 'h-9 min-w-0')} />
          <span className="text-right h-[30px]">Size:</span>
          <span className="h-[30px]">1289 x 976</span>
        </div>
        <div className="h-[22px]" />
        <Rule />
        <h4 className="mt-[15px] mb-[3px]">Projection</h4>
        <div className="pl-[42px]">
          <Radio name="projection" label="Parallel" on />
          <Radio name="projection" label="Perspective" />
          <Radio name="projection" label="Two point perspective" />
        </div>
        <div className="h-11" />
        <Rule />
        <h4 className="mt-[15px]">Wallpaper</h4>
        <div className="mt-[14px] ml-[50px] relative w-[190px]">
          <select aria-label="Wallpaper" className="appearance-none w-full h-[30px] bg-transparent outline-none"><option>Choose...</option></select>
          <UpDown className="absolute right-2 top-[6px] text-[#333]" />
        </div>
        <div className="mt-3 ml-10 flex flex-col gap-[10px]">
          <Check label="Show wallpaper" disabled className="h-[30px]" />
          <Check label="Show wallpaper as gray scale" disabled className="h-[30px]" />
        </div>
        <div className="h-8" />
        <Rule />
        <h4 className="mt-[15px]">Camera</h4>
        <div className="mt-[18px] grid grid-cols-[167px_auto] justify-start gap-x-5 gap-y-5 items-center">
          <NumberField id="lens" label="Lens length:" value="50" />
          <NumberField id="rot" label="Rotation:" value="0" />
          <NumberField id="xloc" label="X location:" value="2.09" />
          <NumberField id="yloc" label="Y location:" value="-82.37" />
          <NumberField id="zloc" label="Z location:" value="12.86" />
        </div>
        <div className="h-[34px]" />
        <Rule />
        <h4 className="mt-[15px]">Target</h4>
      </div>
    </div>
  );
}

const panelTabs: { name: string; art: ReactNode; on?: boolean }[] = [
  { name: 'Layers', on: true, art: <path d="M22 3 43 15 22 27 1 15ZM8 19 1 23 22 35 43 23 36 19" /> },
  { name: 'Notes', art: <path d="M10 2H26L34 10V35H10ZM26 2V10H34" /> },
  { name: 'Blocks', art: <path d="M19 3 39 9V31L25 38 4 32V14ZM4 14 24 20 39 9M24 20 25 38" /> },
  { name: 'Named views', art: <path d="M8 30V8Q8 3 14 3H40Q42 3 42 9H35V4M35 9V32Q34 37 29 37H5Q1 36 2 32H26Q24 37 29 37M22 32V34" /> },
  { name: 'Display', art: <path d="M3 2H41Q42 2 42 4V30Q42 32 40 32H4Q2 32 2 30V4Q2 2 3 2ZM5 5H39V26H5ZM18 32 16 37M27 32 29 37M9 38H36" /> },
  { name: 'Help', art: <><circle cx="22" cy="20" r="19" /><path d="M14 14C14 5 30 5 30 14 30 19 22 20 22 26" strokeWidth="3.5" /><path d="M22 29V34" strokeWidth="4" /></> },
  { name: 'Notifications', art: <path d="M4 33Q10 30 10 24V16Q10 6 19 4 22 0 25 4 34 6 34 16V24Q34 30 40 33V35H4ZM17 35Q22 42 27 35" /> },
];

const layers = [
  { name: 'D...', fill: '#000000', current: true },
  { name: 'L...', fill: '#c5331d' },
  { name: 'L...', fill: '#8a50d0' },
  { name: 'L...', fill: '#0433ff' },
  { name: 'L...', fill: '#3a8a25' },
  { name: 'L...', fill: '#ffffff' },
];

function LayerTable() {
  const head = ['Name', '', '', '', '', '', 'Linetype', '', '...'];
  return (
    <table className="w-full table-fixed border-collapse">
      <colgroup>
        <col className="w-[83px]" /><col className="w-[46px]" /><col className="w-[46px]" /><col className="w-[46px]" /><col className="w-[60px]" />
        <col className="w-[48px]" /><col className="w-[114px]" /><col className="w-[46px]" /><col />
      </colgroup>
      <thead>
        <tr className="h-[54px] border-b-2 border-[#e2e2e2]">
          {head.map((t, i) => (
            <th key={i} className="p-0 font-normal text-left">
              <div className={clsx('h-8 leading-8 pl-[9px]', i < 8 && 'border-r-2 border-[#e2e2e2]')}>{t}</div>
            </th>
          ))}
        </tr>
      </thead>
      <tbody>
        {layers.map((l, i) => (
          <tr key={i} className="h-[34px]">
            <td className="p-0 pl-[42px] whitespace-nowrap">{l.name}</td>
            <td className="p-0"><input type="radio" name="current-layer" aria-label={`Current layer ${i}`} defaultChecked={l.current} className={clsx(radioCls, 'block mx-auto')} /></td>
            <td className="p-0">
              <svg viewBox="0 0 26 30" className={clsx('block mx-auto w-[26px] h-[30px]', l.current && 'opacity-40')}>
                <path d="M8 20C8 15 1 14 1 8 1 3 7 1 13 1S25 3 25 8C25 14 18 15 18 20L17 23H9Z" fill="url(#bulb)" />
                <path d="M7 7Q13 14 19 7" stroke="#fdf0a8" strokeWidth="3" fill="none" />
                <path d="M9 22H17V27Q13 31 9 27Z" fill="#a9afb8" /><path d="M9 22H13V28Q10 28 9 26Z" fill="#e4e8ee" />
              </svg>
            </td>
            <td className="p-0">
              <svg viewBox="0 0 28 30" className={clsx('block mx-auto w-7 h-[30px]', l.current && 'opacity-40')}>
                <path d="M15 15V8C15 0 26 0 26 8V12" fill="none" stroke="#9a9a9a" strokeWidth="4" />
                <path d="M15 15V8C15 1 26 1 26 8V12" fill="none" stroke="#e2e2e2" strokeWidth="1.5" />
                <rect x="1" y="14" width="19" height="14" rx="2" fill="url(#brass)" />
                <path d="M1 18H20M1 22H20" stroke="#8d4f17" strokeWidth="1" />
              </svg>
            </td>
            <td className="p-0">
              <svg viewBox="0 0 28 28" className="block mx-auto w-7 h-7"><rect x="1" y="1" width="26" height="26" fill={l.fill} stroke="#000" strokeWidth="2" /></svg>
            </td>
            <td className="p-0 pr-[10px]">
              <svg viewBox="0 0 28 28" className="block mx-auto w-7 h-7"><circle cx="14" cy="14" r="13" fill="#fcfcfc" stroke="#111" strokeWidth="1.5" /></svg>
            </td>
            <td className="p-0">
              <div className="relative pl-[9px]">
                <select aria-label={`Linetype ${i}`} className="appearance-none w-full h-[30px] bg-transparent outline-none"><option>Conti...</option></select>
                <UpDown className="absolute right-[7px] top-[6px] text-[#444]" />
              </div>
            </td>
            <td className="p-0">
              <svg viewBox="0 0 30 30" className="block mx-auto w-[30px] h-[30px]"><path d="M15 1 29 15 15 29 1 15Z" fill={l.fill} stroke="#000" strokeWidth="1.5" strokeLinejoin="round" /></svg>
            </td>
            <td className="p-0">
              <div className="relative pl-[10px]">
                <select aria-label={`Print width ${i}`} className="appearance-none w-[8px] h-[30px] bg-transparent outline-none overflow-hidden"><option>Default</option></select>
                <UpDown className="absolute right-[7px] top-[6px] text-[#444]" />
              </div>
            </td>
          </tr>
        ))}
      </tbody>
    </table>
  );
}

function RightPanels() {
  return (
    <aside className="w-[532px] shrink-0 flex flex-col min-h-0 border-l-2 border-[#858585]">
      <Properties />
      <div className="flex-1 min-h-0 flex flex-col border-t-3 border-[#808080]">
        <PanelHeader title="Panels: Layers">
          <div className="flex gap-4 pt-5 pb-4 pl-[56px]">
            {panelTabs.map((t) => (
              <button key={t.name} aria-label={t.name}>
                <svg viewBox="0 0 44 40" className="w-11 h-10" fill="none" stroke={t.on ? '#2f7cf6' : '#6e6e6e'} strokeWidth="2" strokeLinejoin="round">{t.art}</svg>
              </button>
            ))}
          </div>
        </PanelHeader>
        <div className="flex-1 min-h-0 bg-white overflow-hidden"><LayerTable /></div>
        <div className="h-[66px] shrink-0 flex items-center gap-8 pl-9 border-t-2 border-[#d2d2d2]">
          <div className="flex items-center h-8 rounded-lg border-2 border-[#dedede] divide-x-2 divide-[#dedede]">
            <button aria-label="Add layer" className="w-12 grid place-items-center">
              <svg viewBox="0 0 22 22" className="w-[22px] h-[22px]" stroke="#444" strokeWidth="2"><path d="M11 0V22M0 11H22" /></svg>
            </button>
            <button aria-label="Remove layer" className="w-12 grid place-items-center">
              <svg viewBox="0 0 22 22" className="w-[22px] h-[22px]" stroke="#a5a5a5" strokeWidth="2"><path d="M0 11H22" /></svg>
            </button>
          </div>
          <button aria-label="Layer options" className="w-16 h-[34px] grid place-items-center rounded-lg bg-white shadow-[0_1px_3px_rgba(0,0,0,0.35)]"><Gear /></button>
        </div>
      </div>
    </aside>
  );
}

/* ---------- window ---------- */

function Toolbar() {
  const [on, setOn] = useState<string[]>(['Grid Snap', 'SmartTrack']);
  const toggle = (t: string) => setOn(on.includes(t) ? on.filter((o) => o !== t) : [...on, t]);
  return (
    <header className="h-[86px] shrink-0 grid grid-cols-[1fr_1fr] items-center pt-3 pl-6 pr-6 border-b-2 border-[#d0d0d0]">
      <div className="flex items-center">
        <button aria-label="Toggle left sidebar">
          <svg viewBox="0 0 40 40" className="w-10 h-10"><path d="M1.5 1.5H38.5V38.5H1.5Z" fill="none" stroke="#2a75f3" strokeWidth="3" /><path d="M0 0H12V40H0Z" fill="#2a75f3" /></svg>
        </button>
        <div className="flex gap-[18px] ml-[93px]">
          {['Grid Snap', 'Ortho', 'Planar', 'SmartTrack', 'Gumball', 'History'].map((t) => (
            <button key={t} onClick={() => toggle(t)}
              className={clsx('h-[30px] px-[22px] rounded-lg text-[25px] leading-[30px] font-semibold whitespace-nowrap', on.includes(t) ? 'bg-[#c8c8c8] text-[#383838]' : 'text-[#6b6b6b]')}>{t}</button>
          ))}
        </div>
      </div>
      <div className="flex items-center pl-[264px]">
        <button aria-label="Record history">
          <svg viewBox="0 0 42 40" className="w-[42px] h-10" fill="none"><circle cx="19" cy="20" r="17.5" stroke="#909090" strokeWidth="2" /><path d="M15 16H23V24H15Z" fill="#444" /><path d="M20 20H42" stroke="#666" strokeWidth="2.5" /></svg>
        </button>
        <button aria-label="Filter" className="ml-5">
          <svg viewBox="0 0 42 42" className="w-[42px] h-[42px]" fill="none" stroke="#4a4a4a" strokeWidth="2"><circle cx="21" cy="21" r="20" /><circle cx="21" cy="21" r="10.5" /></svg>
        </button>
        <button className="ml-5 w-[384px] h-9 flex items-center rounded-lg border-2 border-[#dedede] pl-[5px] text-[22px] text-[#4a4a4a]">
          <span className="w-7 h-7 bg-black" />
          <span className="flex-1 text-center pr-1">Default</span>
        </button>
        <button aria-label="Toggle right sidebar" className="ml-auto">
          <svg viewBox="0 0 40 40" className="w-10 h-10"><path d="M1.5 1.5H38.5V38.5H1.5Z" fill="none" stroke="#2a75f3" strokeWidth="3" /><path d="M28 0H40V40H28Z" fill="#2a75f3" /></svg>
        </button>
      </div>
    </header>
  );
}

function StatusBar() {
  return (
    <footer className="h-14 shrink-0 grid grid-cols-[1fr_1021px] items-center bg-linear-to-b from-[#dadada] to-[#d0d0d0] pl-2 pt-1">
      <div className="flex items-center gap-1 whitespace-nowrap">
        <svg viewBox="0 0 30 22" className="w-[30px] h-[22px]" stroke="#666" strokeWidth="2"><path d="M1 2H29M1 8H29M1 14H29M1 20H29" /></svg>
        <span>File successfully saved as Rhino 6 file /Users/alexrasla/Documents/mat238/week5/kit.3dm.</span>
      </div>
      <div className="grid grid-cols-[147px_168px_163px_171px_1fr] items-center whitespace-nowrap">
        <span>Millimeters</span>
        <div className="relative w-[140px]">
          <select aria-label="Coordinates" className="appearance-none w-full h-8 rounded-lg border-2 border-[#929292] pl-2 leading-7 bg-[#dcdcdc] outline-none"><option>CPlane</option></select>
          <UpDown className="absolute right-[9px] top-[7px] text-[#8a8a8a]" />
        </div>
        <span>X: 28.562</span>
        <span>Y: 24.680</span>
        <span>Z: 0.000</span>
      </div>
    </footer>
  );
}

export default function App() {
  return (
    <div className="h-screen flex flex-col overflow-hidden bg-[#ececec] text-[#222] text-[22px] leading-[30px] font-['Inter','Liberation_Sans',sans-serif] [font-variant-ligatures:no-contextual]">
      <Defs />
      <Toolbar />
      <div className="flex-1 min-h-0 flex">
        <Sidebar />
        <main className="flex-1 min-w-0 flex flex-col">
          <TabBar />
          <div className="flex-1 min-h-0 grid grid-cols-[1289fr_1268fr] gap-[6px] bg-[#d6d6d6]">
            <div className="grid grid-rows-[926fr_976fr] gap-[6px] min-h-0 min-w-0">
              <TopView />
              <FrontView />
            </div>
            <div className="grid grid-rows-[924fr_978fr] gap-[6px] min-h-0 min-w-0">
              <PerspectiveView />
              <RightView />
            </div>
          </div>
        </main>
        <RightPanels />
      </div>
      <StatusBar />
    </div>
  );
}
